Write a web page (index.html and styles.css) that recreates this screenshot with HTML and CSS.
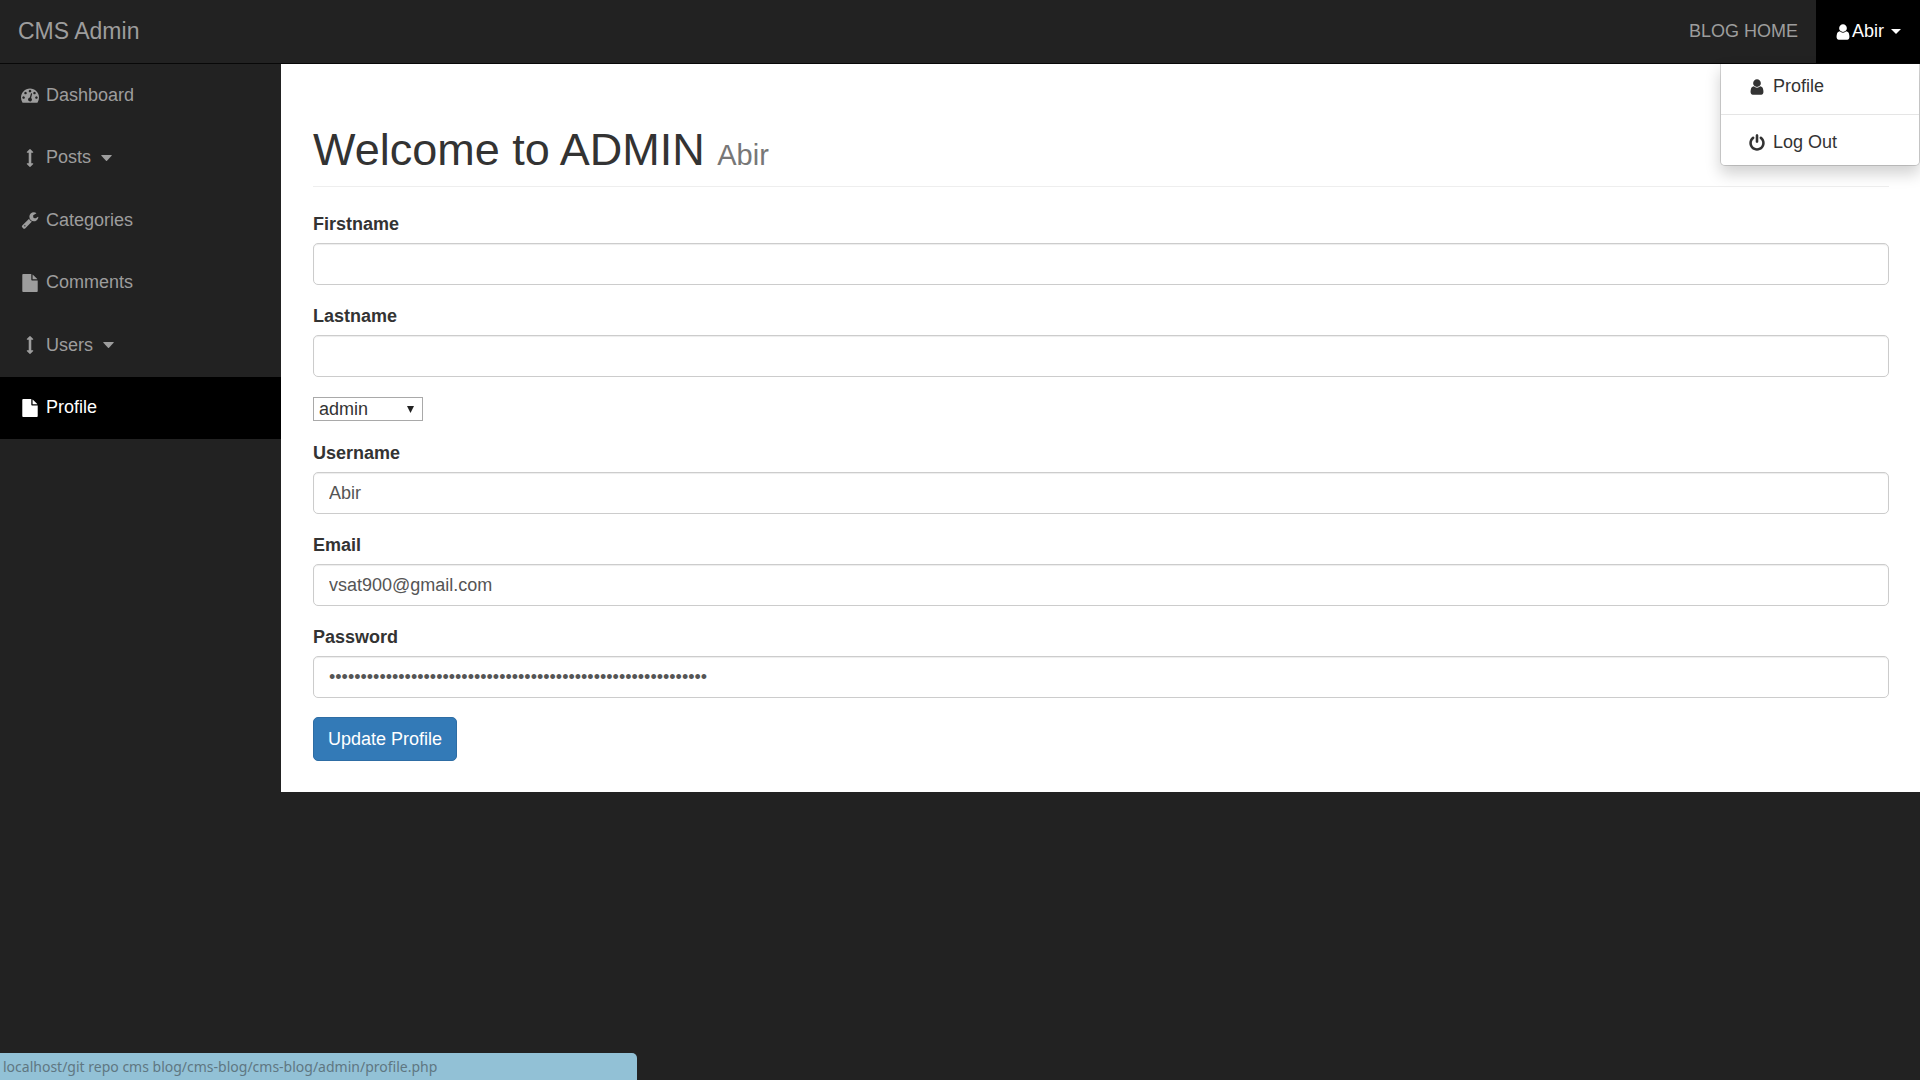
FILE: index.html
```html
<!DOCTYPE html>
<html lang="en">
<head>
<meta charset="utf-8">
<meta name="viewport" content="width=device-width, initial-scale=1">
<title>CMS Admin</title>
<link rel="stylesheet" href="styles.css">
</head>
<body>
<svg class="sprite" aria-hidden="true">
  <symbol id="i-user" viewBox="0 0 1792 1792"><path d="M1536 1399q0 109-62.5 187t-150.5 78h-854q-88 0-150.5-78t-62.5-187q0-85 8.5-160.5t31.5-152 58.5-131 94-89 134.5-34.5q131 128 313 128t313-128q76 0 134.5 34.5t94 89 58.5 131 31.5 152 8.5 160.5zm-256-887q0 159-112.5 271.5t-271.5 112.5-271.5-112.5-112.5-271.5 112.5-271.5 271.5-112.5 271.5 112.5 112.5 271.5z"/></symbol>
  <symbol id="i-power" viewBox="0 0 1792 1792"><path d="M1664 896q0 156-61 298t-164 245-245 164-298 61-298-61-245-164-164-245-61-298q0-182 80.5-343t226.5-270q43-32 95.5-25t83.5 50q32 42 24.5 94.5t-49.5 84.5q-98 74-151.5 181t-53.5 228q0 104 40.5 198.5t109.5 163.5 163.5 109.5 198.5 40.5 198.5-40.5 163.5-109.5 109.5-163.5 40.5-198.5q0-121-53.5-228t-151.5-181q-42-32-49.5-84.5t24.5-94.5q31-43 84-50t95 25q146 109 226.5 270t80.5 343zm-640-768v640q0 52-38 90t-90 38-90-38-38-90v-640q0-52 38-90t90-38 90 38 38 90z"/></symbol>
  <symbol id="i-dashboard" viewBox="0 0 1792 1792"><path d="M384 1152q0-53-37.5-90.5t-90.5-37.5-90.5 37.5-37.5 90.5 37.5 90.5 90.5 37.5 90.5-37.5 37.5-90.5zm192-448q0-53-37.5-90.5t-90.5-37.5-90.5 37.5-37.5 90.5 37.5 90.5 90.5 37.5 90.5-37.5 37.5-90.5zm428 481l101-382q6-26-7.5-48.5t-38.5-29.5-48 6.5-30 39.5l-101 382q-60 5-107 43.5t-63 98.5q-20 77 20 146t117 89 146-20 89-117q16-60-6-117t-72-91zm660-33q0-53-37.5-90.5t-90.5-37.5-90.5 37.5-37.5 90.5 37.5 90.5 90.5 37.5 90.5-37.5 37.5-90.5zm-640-640q0-53-37.5-90.5t-90.5-37.5-90.5 37.5-37.5 90.5 37.5 90.5 90.5 37.5 90.5-37.5 37.5-90.5zm448 192q0-53-37.5-90.5t-90.5-37.5-90.5 37.5-37.5 90.5 37.5 90.5 90.5 37.5 90.5-37.5 37.5-90.5zm320 448q0 261-141 483-19 29-54 29h-1402q-35 0-54-29-141-221-141-483 0-182 71-348t191-286 286-191 348-71 348 71 286 191 191 286 71 348z"/></symbol>
  <symbol id="i-wrench" viewBox="0 0 1792 1792"><path d="M448 1472q0-26-19-45t-45-19-45 19-19 45 19 45 45 19 45-19 19-45zm644-420l-682 682q-37 37-90 37-52 0-91-37l-106-108q-38-36-38-90 0-53 38-91l681-681q39 98 114.5 173.5t173.5 114.5zm634-435q0 39-23 106-47 134-164.5 217.5t-258.5 83.5q-185 0-316.5-131.5t-131.5-316.5 131.5-316.5 316.5-131.5q58 0 121.5 16.5t107.5 46.5q16 11 16 28t-16 28l-293 169v224l193 107q5-3 79-48.5t135.5-81 70.5-35.5q15 0 23.5 10t8.5 25z"/></symbol>
  <symbol id="i-file" viewBox="0 0 1792 1792"><path d="M1152 512v-472q22 14 36 28l408 408q14 14 28 36h-472zm-128 32q0 40 28 68t68 28h544v1056q0 40-28 68t-68 28h-1344q-40 0-68-28t-28-68v-1600q0-40 28-68t68-28h800v544z"/></symbol>
  <symbol id="i-arrows" viewBox="0 0 1792 1792"><path d="M1216 320q0 26-19 45t-45 19h-128v1024h128q26 0 45 19t19 45-19 45l-256 256q-19 19-45 19t-45-19l-256-256q-19-19-19-45t19-45 45-19h128v-1024h-128q-26 0-45-19t-19-45 19-45l256-256q19-19 45-19t45 19l256 256q19 19 19 45z"/></symbol>
  <symbol id="i-caret" viewBox="0 0 11 6"><path d="M.6 0h9.8q.6.2.2.8L6 5.700q-.5.5-1 0L.4.800Q0 .2.600 0z"/></symbol>
</svg>

<header class="navbar">
  <a class="brand" href="#">CMS Admin</a>
  <nav class="top-nav" aria-label="Account">
    <a class="top-link" href="#">BLOG HOME</a>
    <div class="account">
      <button class="top-link account-toggle" type="button" aria-expanded="true">
        <svg class="icon"><use href="#i-user"/></svg><span>Abir</span><span class="caret"></span>
      </button>
      <ul class="menu">
        <li><a href="#"><svg class="icon icon-fw"><use href="#i-user"/></svg>Profile</a></li>
        <li class="divider"></li>
        <li><a href="#"><svg class="icon icon-fw"><use href="#i-power"/></svg>Log Out</a></li>
      </ul>
    </div>
  </nav>
</header>

<div class="layout">
  <nav class="sidebar" aria-label="Main">
    <a href="#"><svg class="icon icon-fw"><use href="#i-dashboard"/></svg>Dashboard</a>
    <a href="#"><svg class="icon icon-fw"><use href="#i-arrows"/></svg>Posts<svg class="side-caret"><use href="#i-caret"/></svg></a>
    <a href="#"><svg class="icon icon-fw"><use href="#i-wrench"/></svg>Categories</a>
    <a href="#"><svg class="icon icon-fw"><use href="#i-file"/></svg>Comments</a>
    <a href="#"><svg class="icon icon-fw"><use href="#i-arrows"/></svg>Users<svg class="side-caret"><use href="#i-caret"/></svg></a>
    <a class="active" href="#"><svg class="icon icon-fw"><use href="#i-file"/></svg>Profile</a>
  </nav>

  <main class="page">
    <h1>Welcome to ADMIN <small>Abir</small></h1>
    <form class="form">
      <div class="field">
        <label for="firstname">Firstname</label>
        <input id="firstname" type="text">
      </div>
      <div class="field">
        <label for="lastname">Lastname</label>
        <input id="lastname" type="text">
      </div>
      <div class="role">
        <select aria-label="Role">
          <option>admin</option>
          <option>subscriber</option>
        </select>
        <svg class="role-arrow" viewBox="0 0 7 7"><path d="M0 0h7L3.500 7z"/></svg>
      </div>
      <div class="field">
        <label for="username">Username</label>
        <input id="username" type="text" value="Abir">
      </div>
      <div class="field">
        <label for="email">Email</label>
        <input id="email" type="email" value="vsat900@gmail.com">
      </div>
      <div class="field">
        <label for="password">Password</label>
        <input id="password" type="password" value="000000000000000000000000000000000000000000000000000000000000">
      </div>
      <button class="submit" type="button">Update Profile</button>
    </form>
  </main>
</div>

<div class="status">localhost/git repo cms blog/cms-blog/cms-blog/admin/profile.php</div>
</body>
</html>
```
FILE: styles.css
```css
* {
  box-sizing: border-box;
}

body {
  margin: 0;
  background: #222;
  color: #333;
  font-family: "Liberation Sans", Arial, sans-serif;
  font-size: 18px;
  line-height: 25px;
}

a {
  text-decoration: none;
}

input,
select,
button {
  font: inherit;
}

.sprite {
  position: absolute;
  width: 0;
  height: 0;
}

.icon {
  flex: none;
  width: 18px;
  height: 18px;
  fill: currentColor;
}

.icon-fw {
  width: 22px;
  margin-right: 5px;
}

/* Top bar */
.navbar {
  display: flex;
  justify-content: space-between;
  height: 64px;
  border-bottom: 1px solid #080808;
}

.brand {
  display: flex;
  align-items: center;
  padding: 0 18px;
  color: #9d9d9d;
  font-size: 23px;
}

.top-nav {
  display: flex;
}

.top-link {
  display: flex;
  align-items: center;
  height: 100%;
  padding: 0 18px;
  color: #9d9d9d;
}

.account {
  position: relative;
}

.account-toggle {
  padding-right: 19px;
  border: 0;
  background: #000;
  color: #fff;
}

.caret {
  margin-left: 7px;
  border: 5px solid transparent;
  border-top-color: currentColor;
  border-bottom: 0;
}

.menu {
  position: absolute;
  top: 100%;
  right: 0;
  z-index: 10;
  width: 200px;
  margin: 0;
  padding: 7px 0;
  border: 1px solid rgba(0, 0, 0, 0.15);
  border-radius: 0 0 5px 5px;
  background: #fff;
  background-clip: padding-box;
  box-shadow: 0 8px 15px rgba(0, 0, 0, 0.18);
  list-style: none;
}

.menu a {
  display: flex;
  align-items: center;
  padding: 3px 25px;
  color: #333;
}

.menu .divider {
  height: 1px;
  margin: 12px 0;
  background: #e5e5e5;
}

/* Side navigation and content */
.layout {
  display: grid;
  grid-template-columns: 281px 1fr;
  align-items: start;
}

.sidebar {
  display: grid;
  grid-auto-rows: 1fr;
  min-height: 375px;
}

.sidebar a {
  display: flex;
  align-items: center;
  padding: 0 19px;
  color: #9d9d9d;
}

.sidebar .active {
  background: #000;
  color: #fff;
}

.side-caret {
  width: 11px;
  height: 6px;
  margin-left: 10px;
  fill: currentColor;
}

.page {
  padding: 61px 31px 31px 32px;
  background: #fff;
}

h1 {
  margin: 0 0 25px;
  padding-bottom: 11px;
  border-bottom: 1px solid #eee;
  font-size: 45px;
  font-weight: 400;
  line-height: 50px;
}

h1 small {
  color: #777;
  font-size: 29px;
  line-height: 1;
}

.form {
  display: flex;
  flex-direction: column;
  align-items: flex-start;
  gap: 19px;
}

.field {
  display: flex;
  flex-direction: column;
  gap: 6px;
  width: 100%;
}

.field label {
  font-weight: 700;
}

.field input {
  width: 100%;
  height: 42px;
  padding: 0 15px;
  border: 1px solid #ccc;
  border-radius: 5px;
  background: #fff;
  box-shadow: inset 0 1px 1px rgba(0, 0, 0, 0.075);
  color: #555;
}

.role {
  position: relative;
  display: flex;
  padding: 1px 0;
}

.role select {
  appearance: none;
  width: 110px;
  height: 24px;
  padding: 0 5px;
  border: 1px solid #a9a9a9;
  border-radius: 0;
  background: #fff;
  color: #333;
  line-height: 22px;
}

.role-arrow {
  position: absolute;
  top: 10px;
  right: 9px;
  width: 7px;
  height: 7px;
  fill: #222;
  pointer-events: none;
}

.submit {
  height: 44px;
  padding: 0 14px;
  border: 1px solid #2e6da4;
  border-radius: 5px;
  background: #337ab7;
  color: #fff;
}

/* Link address shown at the foot of the window */
.status {
  position: fixed;
  bottom: 0;
  left: 0;
  width: 637px;
  max-width: 100%;
  padding: 0 3px;
  border-top-right-radius: 5px;
  background: #92c1d6;
  color: #5f7782;
  font-family: "Noto Sans", sans-serif;
  font-size: 14px;
  line-height: 27px;
}
```
